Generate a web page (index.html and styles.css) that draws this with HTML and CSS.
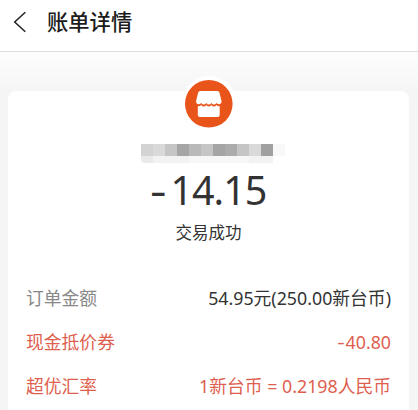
FILE: index.html
```html
<!DOCTYPE html>
<html lang="zh-CN">
<head>
<meta charset="utf-8">
<title>账单详情</title>
<link rel="stylesheet" href="styles.css">
</head>
<body>
<header class="bar">
  <svg class="back" width="14" height="22" viewBox="0 0 14 22"><path d="M12.3 1.2 1.7 11l10.6 9.8" fill="none" stroke="#222" stroke-width="1.5"/></svg>
  <h1 class="title">账单详情</h1>
</header>
<main class="page">
  <section class="card">
    <div class="logo">
      <svg width="48" height="48" viewBox="0 0 48 48">
        <circle cx="23.8" cy="23.8" r="23.8" fill="#e9541b"/>
        <path d="M15.2 11h17.2q1.7 0 2.1 1.7l2 8.3q.2 2.8-2.2 3.2-1.7.1-2.8-1.3-1.2 1.6-2.6 1.6t-2.5-1.6q-1.1 1.6-2.6 1.6t-2.6-1.6q-1.1 1.6-2.5 1.6t-2.6-1.6q-1.1 1.4-2.8 1.3-2.4-.4-2.2-3.2l2-8.3q.4-1.7 2.1-1.7z" fill="#fff"/>
        <path d="M12.8 26.2q1.9.2 3.3-1.2 1.1 1.6 2.6 1.6t2.6-1.6q1.1 1.6 2.5 1.6t2.6-1.6q1.1 1.6 2.6 1.6t2.5-1.6q1.2 1.4 3.2 1.2v8.8q0 2-2 2H14.8q-2 0-2-2z" fill="#fff"/>
      </svg>
    </div>
    <div class="mask">
      <i class="t1"></i><i class="t2"></i><i class="t3"></i><i class="t4"></i><i class="t5"></i><i class="t3"></i><i class="t4"></i><i class="t6"></i><i class="t3"></i><i class="t2"></i><i class="t7"></i><i class="t0"></i>
      <b class="f1"></b><b class="f2"></b><b class="f2"></b><b class="f2"></b><b class="f3"></b><b class="f3"></b><b class="f3"></b><b class="f3"></b><b class="f3"></b><b class="f2"></b><b class="f2"></b><b class="f0"></b>
    </div>
    <div class="amount"><span class="sign">-</span>14.15</div>
    <div class="status">交易成功</div>
    <dl class="rows">
      <div class="row"><dt>订单金额</dt><dd>54.95元(250.00新台币)</dd></div>
      <div class="row promo"><dt>现金抵价券</dt><dd><span class="sign">-</span>40.80</dd></div>
      <div class="row promo"><dt>超优汇率</dt><dd>1新台币 = 0.2198人民币</dd></div>
    </dl>
  </section>
</main>
</body>
</html>
```
FILE: styles.css
```css
* { box-sizing: border-box; margin: 0; padding: 0; }
body {
  height: 410px;
  overflow: hidden;
  background: #f5f5f5;
  font-family: "Noto Sans", "Noto Sans CJK SC", sans-serif;
  color: #333;
}
.bar {
  display: flex;
  align-items: center;
  height: 52px;
  padding: 0 0 7px 13px;
  background: #fff;
  border-bottom: 1px solid #dedede;
}
.title {
  margin-left: 20px;
  font-size: 21.3px;
  font-weight: 500;
  line-height: 30px;
  color: #1c1c1c;
}
.page {
  height: 358px;
  padding: 39px 9px 0 8px;
  background: linear-gradient(#fdfdfd, #fafafa 18px, #f5f5f5 40px);
}
.card {
  display: flex;
  flex-direction: column;
  align-items: center;
  height: 330px;
  background: #fff;
  border-radius: 8px 8px 0 0;
}
.logo {
  display: flex;
  width: 56px;
  height: 56px;
  margin-top: -15px;
  padding: 4px;
  background: #fff;
  border-radius: 50%;
}
.mask {
  display: grid;
  grid-template-columns: repeat(12, 12px);
  grid-template-rows: 12px 7px;
  margin: 12px 0 0 9px;
  border-radius: 0 0 8px 4px;
  overflow: hidden;
}
.t0 { background: #f8f8f8; }
.t1 { background: #d3d3d3; }
.t2 { background: #d9d9d9; }
.t3 { background: #c5c5c5; }
.t4 { background: #a5a5a5; }
.t5 { background: #b9b9b9; }
.t6 { background: #acacac; }
.t7 { background: #a0a0a0; }
.f0 { background: #fff; }
.f1 { background: #e9e9e9; }
.f2 { background: #f2f2f2; }
.f3 { background: #f7f7f7; }
.sign {
  display: inline-block;
  margin-right: 1.5px;
  transform: scaleX(1.3);
}
.amount {
  margin: 2px 0 0 1px;
  font-size: 39.5px;
  line-height: 50px;
  letter-spacing: -1px;
}
.amount .sign {
  margin-right: 6px;
  letter-spacing: 0;
}
.status {
  margin-top: 6px;
  font-size: 16.5px;
  line-height: 24px;
}
.rows { width: 100%; margin-top: 31px; padding: 0 18px; }
.row {
  display: flex;
  justify-content: space-between;
  align-items: center;
  height: 44px;
  font-size: 17.8px;
  line-height: 26px;
  white-space: nowrap;
}
.row dt { color: #888; }
.row.promo, .row.promo dt { color: #de5f50; }
```
